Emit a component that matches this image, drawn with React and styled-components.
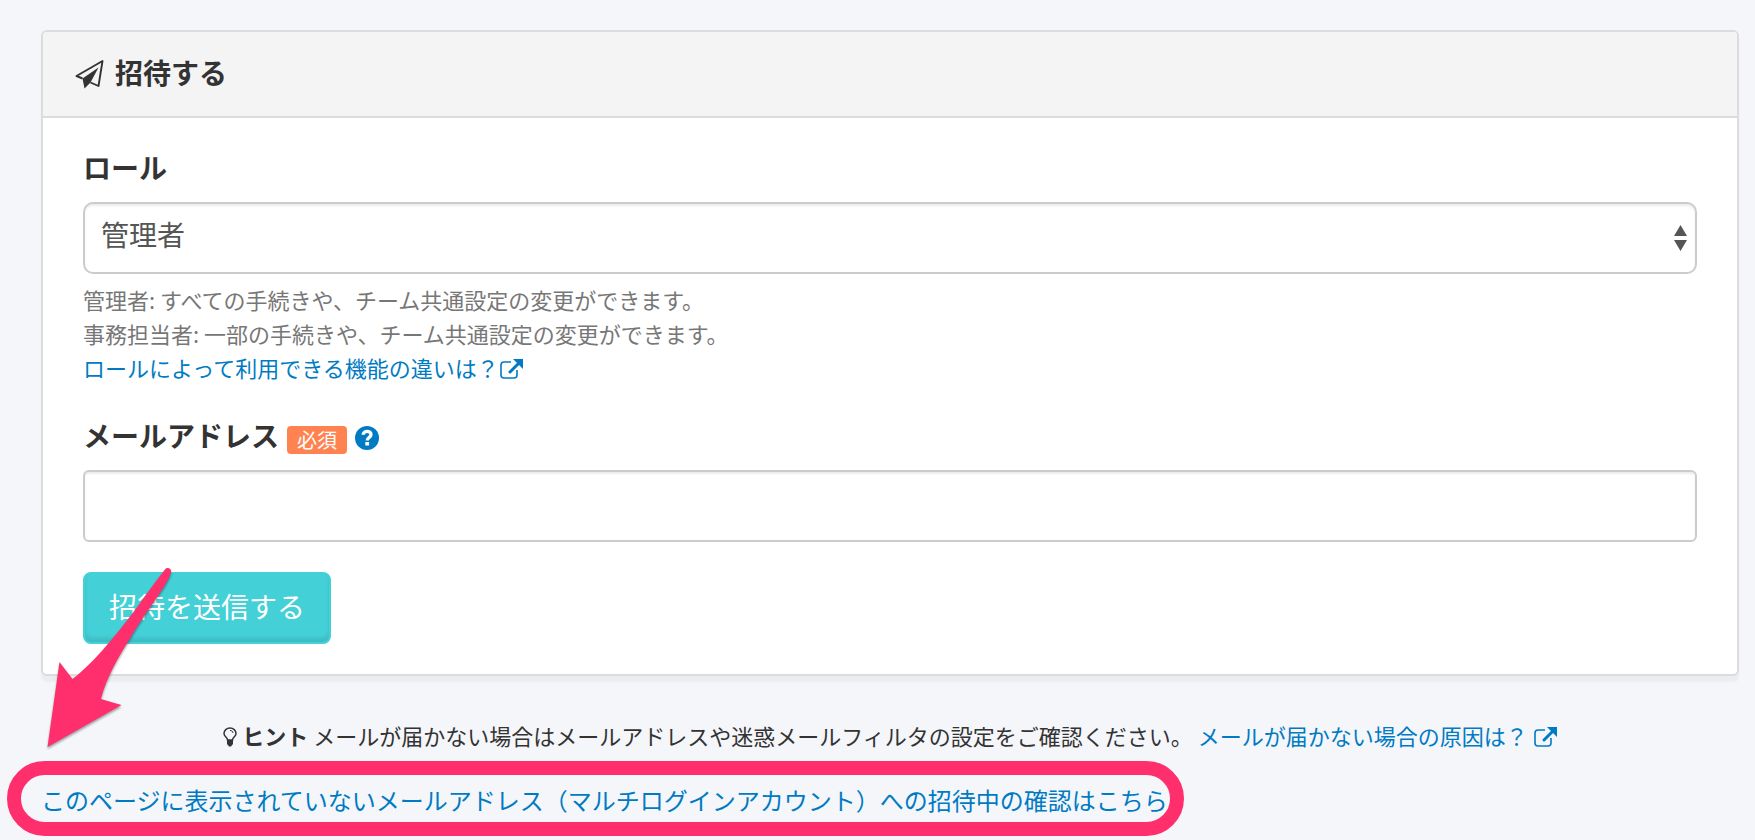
import React, { useState } from "react";
import styled, { createGlobalStyle } from "styled-components";

const font = '"Noto Sans CJK JP", sans-serif';

const GlobalStyle = createGlobalStyle`
  *, *::before, *::after { box-sizing: border-box; }
  body {
    margin: 0;
    background: #f5f6fa;
    color: #333;
    font-family: ${font};
    font-size: 28px;
  }
`;

const Page = styled.main`
  display: flow-root;
  position: relative;
  padding: 30px 16px 16px 41px;
`;

const Card = styled.section`
  background: #fff;
  border: 2px solid #dcdcdc;
  border-radius: 6px;
  box-shadow: 0 6px 2px rgba(0, 0, 0, 0.04);
`;

const CardHeader = styled.header`
  display: flex;
  align-items: center;
  gap: 10px;
  height: 86px;
  padding: 0 32px;
  background: #f4f4f4;
  border-bottom: 2px solid #dcdcdc;
  border-radius: 4px 4px 0 0;
`;

const Title = styled.h1`
  margin: 0;
  padding-bottom: 4px;
  font-size: 28px;
  font-weight: 700;
  line-height: 38px;
`;

const Form = styled.form`
  display: flex;
  flex-direction: column;
  align-items: flex-start;
  gap: 30px;
  padding: 30px 40px;
`;

const Field = styled.div`
  width: 100%;
`;

const LabelRow = styled.div`
  display: flex;
  align-items: flex-end;
  gap: 8px;
  margin-bottom: 16px;
`;

const Label = styled.label`
  font-weight: 700;
  line-height: 38px;
`;

const Badge = styled.span`
  padding: 0 10px;
  border-radius: 4px;
  background: #ff8351;
  color: #fff;
  font-size: 20px;
  line-height: 28px;
`;

const HelpButton = styled.button`
  display: flex;
  align-items: flex-start;
  height: 28px;
  padding: 0;
  border: 0;
  background: none;
  cursor: pointer;
`;

const control = `
  display: block;
  width: 100%;
  height: 72px;
  padding: 0 16px;
  border: 2px solid #ccc;
  background: #fff;
  box-shadow: inset 0 2px 2px rgba(0, 0, 0, 0.075);
  color: #555;
  font: inherit;
  outline: none;
`;

const SelectBox = styled.div`
  position: relative;
`;

const Select = styled.select`
  ${control}
  appearance: none;
  padding: 0 32px 8px 16px;
  border-radius: 10px;
`;

const SelectArrows = styled.svg`
  position: absolute;
  top: 23px;
  right: 10px;
  pointer-events: none;
`;

const Input = styled.input`
  ${control}
  border-radius: 6px;
`;

const Help = styled.p`
  margin: 8px 0 0;
  padding-bottom: 2px;
  color: #777;
  font-size: 22px;
  line-height: 34px;
`;

const Link = styled.a`
  color: #007bc3;
  text-decoration: none;
`;

const InlineIcon = styled.svg`
  vertical-align: -2px;
`;

const SubmitButton = styled.button`
  height: 72px;
  padding: 0 24px 4px;
  border: 2px solid #44d0d7;
  border-radius: 8px;
  background: #44d0d7;
  box-shadow: inset 0 -4px 4px rgba(0, 0, 0, 0.1);
  color: #fff;
  font: inherit;
  cursor: pointer;
`;

const Hint = styled.p`
  margin: 42px 0 0;
  font-size: 22px;
  line-height: 34px;
  text-align: center;
`;

const Highlighted = styled.div`
  position: relative;
  width: fit-content;
  margin-top: 28px;
  font-size: 24px;
  line-height: 40px;

  &::after {
    content: "";
    position: absolute;
    inset: -19px -16px -16px -34px;
    border: 14px solid #ff2f6d;
    border-radius: 38px;
    pointer-events: none;
  }
`;

const Arrow = styled.svg`
  position: absolute;
  top: 560px;
  left: 40px;
  pointer-events: none;
  filter: drop-shadow(0 2px 1px rgba(0, 0, 0, 0.35));
`;

function ExternalIcon() {
  return (
    <InlineIcon width="24" height="20" viewBox="0 0 24 20" aria-hidden="true">
      <path d="M12 3H5a3 3 0 0 0-3 3v10a3 3 0 0 0 3 3h10a3 3 0 0 0 3-3v-5" fill="none" stroke="currentColor" strokeWidth="1.600" />
      <path d="M11 13 21 3" fill="none" stroke="currentColor" strokeWidth="3" strokeLinecap="round" />
      <path d="M14 0h10v10z" fill="currentColor" />
    </InlineIcon>
  );
}

export default function App() {
  const [role, setRole] = useState("admin");
  const [email, setEmail] = useState("");
  return (
    <>
      <GlobalStyle />
      <Page>
        <Card>
          <CardHeader>
            <svg width="30" height="30" viewBox="0 0 30 30" aria-hidden="true">
              <path d="M7.500 19.500 1.500 17 27.500 2l-4 25-8-3.500" fill="none" stroke="#333" strokeWidth="1.900" strokeLinejoin="round" />
              <path d="M7.500 19.500 23.500 8.500 15.500 23.500l-6 6z" fill="#333" />
            </svg>
            <Title>招待する</Title>
          </CardHeader>
          <Form onSubmit={(e) => e.preventDefault()}>
            <Field>
              <LabelRow>
                <Label htmlFor="role">ロール</Label>
              </LabelRow>
              <SelectBox>
                <Select id="role" value={role} onChange={(e) => setRole(e.target.value)}>
                  <option value="admin">管理者</option>
                  <option value="staff">事務担当者</option>
                </Select>
                <SelectArrows width="13" height="26" viewBox="0 0 13 26" aria-hidden="true">
                  <path d="M6.500 0 13 11H0zM0 15h13L6.500 26z" fill="#555" />
                </SelectArrows>
              </SelectBox>
              <Help>
                管理者: すべての手続きや、チーム共通設定の変更ができます。
                <br />
                事務担当者: 一部の手続きや、チーム共通設定の変更ができます。
                <br />
                <Link href="#roles">
                  ロールによって利用できる機能の違いは？
                  <ExternalIcon />
                </Link>
              </Help>
            </Field>
            <Field>
              <LabelRow>
                <Label htmlFor="email">メールアドレス</Label>
                <Badge>必須</Badge>
                <HelpButton type="button" aria-label="ヘルプ">
                  <svg width="24" height="24" viewBox="0 0 24 24" aria-hidden="true">
                    <circle cx="12" cy="12" r="12" fill="#007bc3" />
                    <path d="M8.200 8.800c0-4.600 7.800-4.400 7.800-.3 0 3-3.800 3-3.800 6" fill="none" stroke="#fff" strokeWidth="3.400" />
                    <path d="M10.300 16h3.800v3.500h-3.800z" fill="#fff" />
                  </svg>
                </HelpButton>
              </LabelRow>
              <Input id="email" type="email" value={email} onChange={(e) => setEmail(e.target.value)} />
            </Field>
            <SubmitButton type="submit">招待を送信する</SubmitButton>
          </Form>
        </Card>
        <Hint>
          <InlineIcon width="14" height="20" viewBox="0 0 14 20" aria-hidden="true">
            <path d="M4.500 13C4.500 10.500 1 9.500 1 6.500a6 5.500 0 0 1 12 0c0 3-3.500 4-3.500 6.500z" fill="none" stroke="#333" strokeWidth="1.500" />
            <path d="M4 13h6v4l-2 2.500H6L4 17z" fill="#333" />
            <path d="M7 3.500c1.800 0 3 1 3 2.500" fill="none" stroke="#333" />
          </InlineIcon>{" "}
          <strong>ヒント</strong> メールが届かない場合はメールアドレスや迷惑メールフィルタの設定をご確認ください。{" "}
          <Link href="#mail">
            メールが届かない場合の原因は？ <ExternalIcon />
          </Link>
        </Hint>
        <Highlighted>
          <Link href="#pending">
            このページに表示されていないメールアドレス（マルチログインアカウント）への招待中の確認はこちら
          </Link>
        </Highlighted>
        <Arrow width="140" height="196" viewBox="40 560 140 196" aria-hidden="true">
          <path d="M165 569.500C167.500 566.500 172 568.500 171 572.500C168 584 152 603 132 635C118 658 107 676 101 699L121.500 705L47.500 747L59.500 662L72.500 679C95 662 119 631 135 610C148 592 158 578 165 569.500Z" fill="#ff2f6d" />
        </Arrow>
      </Page>
    </>
  );
}
